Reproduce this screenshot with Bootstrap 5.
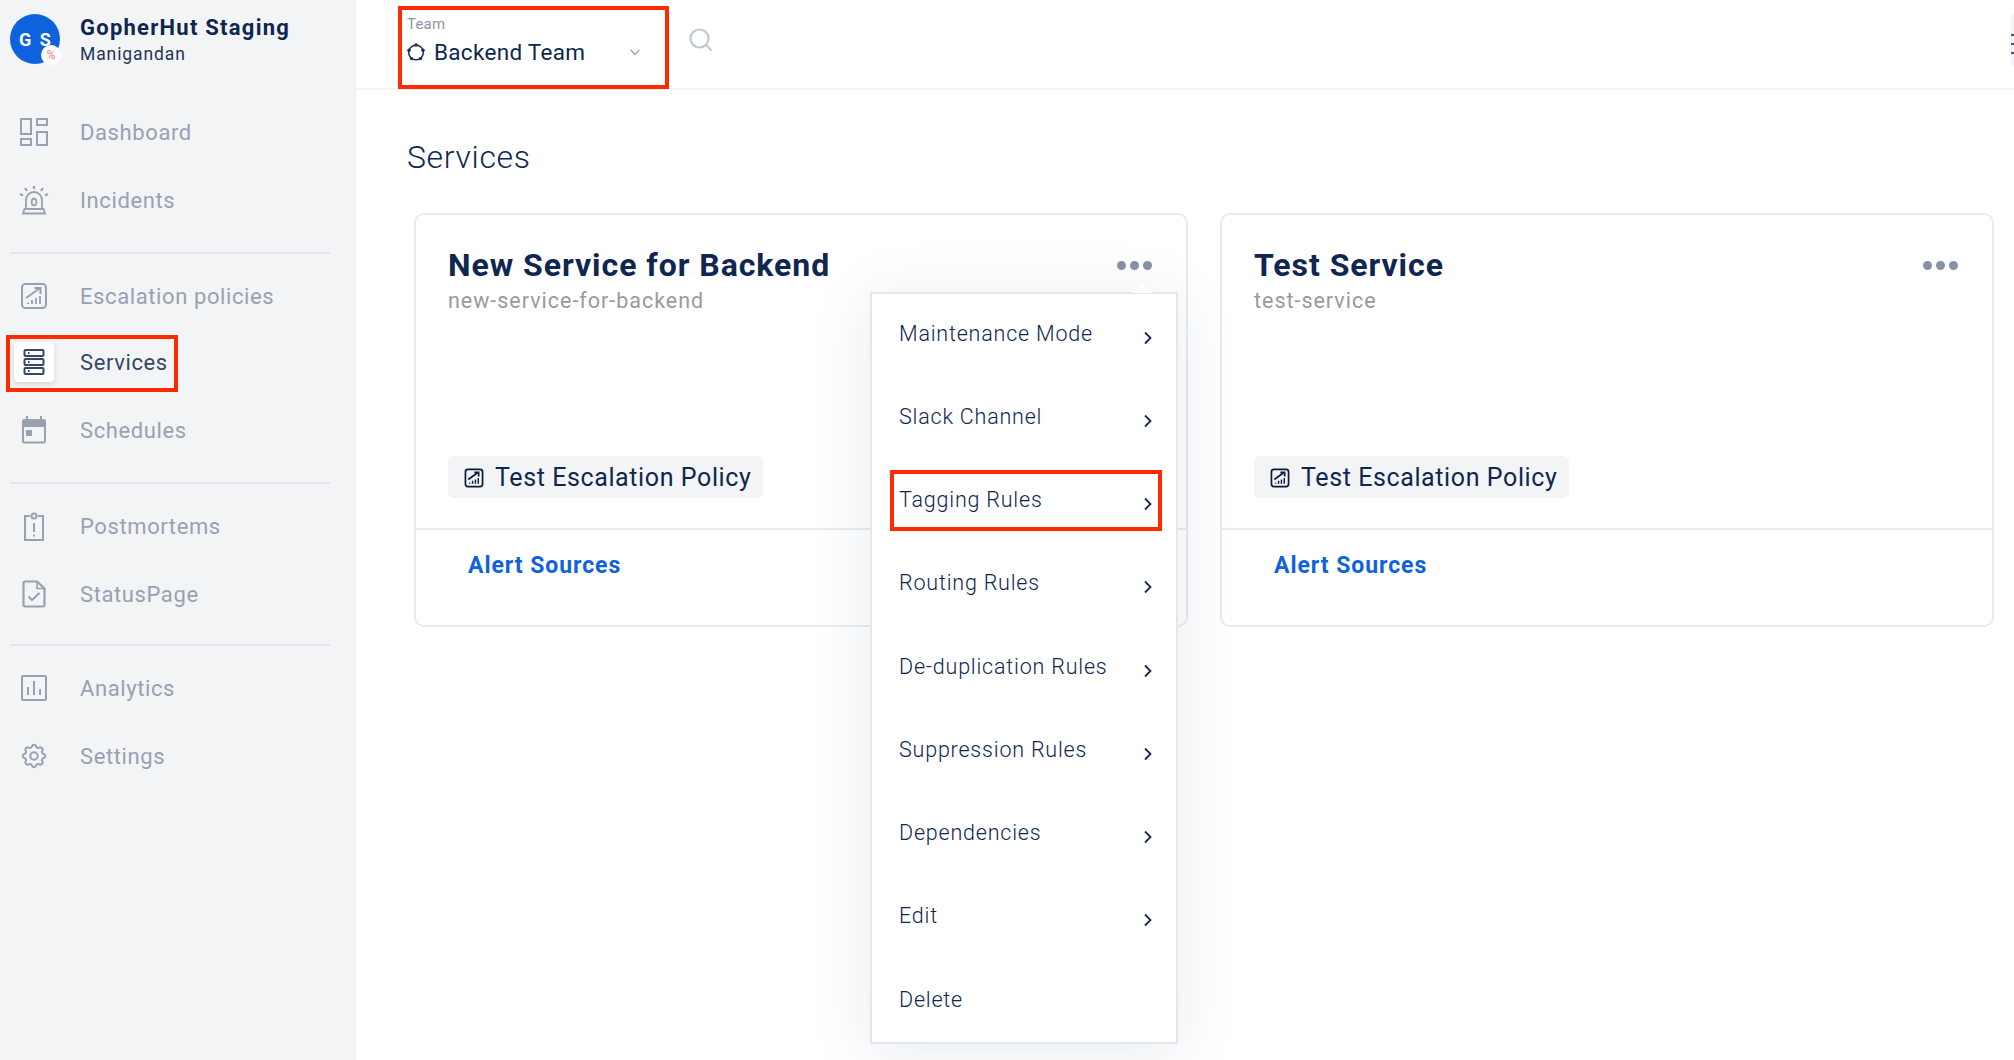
<!doctype html>
<html lang="en">
<head>
<meta charset="utf-8">
<title>Services</title>
<link rel="stylesheet" href="https://cdn.jsdelivr.net/npm/bootstrap@5.3.0/dist/css/bootstrap.min.css">
<style>
html,body{height:100%;overflow:hidden}
body{font-family:Roboto,"Liberation Sans",sans-serif;color:#0f2650;background:#fff}
.app-shell{position:relative;width:2014px;height:1060px;overflow:hidden}
.rail{width:356px;flex:none;background:#f3f4f6;box-shadow:inset -2px 0 2px -1px #eceef1;height:100%}
.rail-head{height:98px;padding:14px 0 0 10px;gap:20px}
.ava{position:relative;width:50px;height:50px;padding-left:2px;border-radius:50%;background:#0f62de;color:#fff;font-weight:700;font-size:18px;letter-spacing:2px;flex:none}
.ava-tag{position:absolute;right:-1px;bottom:-1px;width:20px;height:20px;border-radius:50%;background:#fff;color:#f18a8a;font-size:12px;font-weight:500;letter-spacing:0}
.org{font-size:22px;font-weight:700;line-height:28px;letter-spacing:1.25px;color:#0f2650}
.who{font-size:17.5px;line-height:25px;letter-spacing:.9px;color:#1f3357}
.nav-row{height:68px;padding-left:14px;gap:26px;color:#98a1b1;font-size:22px;letter-spacing:.6px;text-decoration:none}
.nav-row:hover{color:#98a1b1}
.nav-row.is-on{color:#354766;margin-top:-2px}
.tile{width:40px;height:40px;flex:none;border-radius:4px}
.is-on .tile{background:#fff;box-shadow:0 2px 5px rgba(40,50,70,.16)}
.rule{height:2px;width:320px;margin-left:10px;background:#e3e5e9}
.rule-a{margin-top:18px;margin-bottom:8px}
.rule-b{margin-top:16px;margin-bottom:8px}
.topbar{height:90px;border-bottom:2px solid #f3f4f6;padding-left:51px}
.team-pick{width:240px;padding-top:14px}
.team-cap{font-size:15px;line-height:20px;color:#8d96a8;letter-spacing:.2px}
.team-val{font-size:22.5px;line-height:30px;margin-top:3px;letter-spacing:.3px;gap:9px;color:#0f2650}
.team-caret{margin-left:auto;margin-right:7px}
.find{margin:28px 0 0 42px}
.more-edge{width:3px;height:52px;margin-top:14px;background:#f3f4f6;overflow:hidden}
.page-body{padding:0 20px 0 51px}
.page-title{font-size:32px;font-weight:300;line-height:40px;margin:47px 0 36px;color:#0f2650;letter-spacing:.65px}
.svc-row{--bs-gutter-x:32px;margin-left:-9px}
.svc-card{height:414px;border:2px solid #e7ebf3;border-radius:10px;background:#fff}
.svc-top{padding:32px 32px 30px 32px;height:315px;border-bottom:2px solid #e7ebf3}
.svc-name{font-size:32px;font-weight:700;line-height:36px;color:#0f2650;letter-spacing:.95px;margin:0}
.svc-slug{font-size:21.5px;line-height:26px;margin-top:5px;color:#9a9a9a;letter-spacing:.98px}
.dots{gap:4px;margin:0 2px 0 0}
.dots i{display:block;width:9px;height:9px;border-radius:50%;background:#8791a6}
.policy{height:42px;padding:2px 12px 0 16px;gap:11px;background:#f3f4f6;border-radius:6px;font-size:25px;letter-spacing:.6px;color:#0f2650}
.svc-foot{padding:0 0 0 52px;height:95px;font-size:23px;font-weight:700;letter-spacing:.95px}
.svc-foot a{color:#0f62de;text-decoration:none;display:block;margin-top:21px;line-height:30px}
.pop{position:absolute;left:454px;top:77px;width:308px;height:752px;background:#fff;border:2px solid #e2e6ef;box-shadow:0 8px 60px rgba(30,50,90,.1);z-index:5}
.pop::before{content:"";position:absolute;left:260px;top:-11px;border:10px solid transparent;border-top:0;border-bottom-color:#fff}
.pop-row{height:83.25px;padding:0 24px 4px 27px;font-size:21.5px;font-weight:300;color:#0f2650;letter-spacing:.8px}
.pop-row svg{margin-top:8px}
.note{position:absolute;border:4px solid #ff2a00;z-index:10;pointer-events:none}
.note-team{left:398px;top:6px;width:271px;height:83px}
.note-svc{left:6px;top:335px;width:172px;height:57px}
.note-tag{left:890px;top:470px;width:272px;height:61px}
</style>
</head>
<body>
<div class="app-shell d-flex">
  <aside class="rail">
    <div class="rail-head d-flex">
      <div class="ava d-flex align-items-center justify-content-center">G S
        <span class="ava-tag d-flex align-items-center justify-content-center">%</span>
      </div>
      <div>
        <div class="org">GopherHut Staging</div>
        <div class="who">Manigandan</div>
      </div>
    </div>

    <a class="nav-row d-flex align-items-center" href="#">
      <span class="tile d-flex align-items-center justify-content-center">
        <svg width="30" height="30" viewBox="0 0 30 30" fill="none" stroke="currentColor" stroke-width="2"><rect x="2" y="2" width="10" height="15"/><rect x="18" y="2" width="10" height="6"/><rect x="2" y="22" width="10" height="6"/><rect x="18" y="15" width="10" height="13"/></svg>
      </span>Dashboard</a>
    <a class="nav-row d-flex align-items-center" href="#">
      <span class="tile d-flex align-items-center justify-content-center">
        <svg width="30" height="30" viewBox="0 0 30 30" fill="none" stroke="currentColor" stroke-width="1.8"><path d="M7 24V15a8 8 0 0 1 16 0v9"/><path d="M4 28.500l1.500-4.500h19l1.500 4.500z"/><ellipse cx="15" cy="17" rx="2.400" ry="3.400"/><path d="M15 1v3M6 3l2 3M24 3l-2 3M1 9l3 1.500M29 9l-3 1.500" stroke-width="2.200"/></svg>
      </span>Incidents</a>
    <div class="rule rule-a"></div>
    <a class="nav-row d-flex align-items-center" href="#">
      <span class="tile d-flex align-items-center justify-content-center">
        <svg width="28" height="28" viewBox="0 0 28 28" fill="none" stroke="currentColor" stroke-width="2"><rect x="2" y="2" width="24" height="24" rx="3.500"/><path d="M6 16L20 6M14.500 6H20.500V12"/><path d="M8 22v-1.500M12 22v-4M16 22v-6M20 22v-8" stroke-width="1.800"/></svg>
      </span>Escalation policies</a>
    <a class="nav-row is-on d-flex align-items-center" href="#">
      <span class="tile d-flex align-items-center justify-content-center">
        <svg width="22" height="28" viewBox="0 0 22 28" fill="none" stroke="currentColor" stroke-width="2"><rect x="1.500" y="2" width="19" height="6" rx="1"/><rect x="1.500" y="11" width="19" height="6" rx="1"/><rect x="1.500" y="20" width="19" height="6" rx="1"/><path d="M5 5h1.500M5 14h1.500M5 23h1.500"/></svg>
      </span>Services</a>
    <a class="nav-row d-flex align-items-center" href="#">
      <span class="tile d-flex align-items-center justify-content-center">
        <svg width="26" height="30" viewBox="0 0 26 30" fill="currentColor"><path d="M5 1h2v4H5zM19 1h2v4h-2z"/><path d="M3.500 4h19A2.500 2.500 0 0 1 25 6.500V26a2.500 2.500 0 0 1-2.500 2.500h-19A2.500 2.500 0 0 1 1 26V6.500A2.500 2.500 0 0 1 3.500 4zM3 12v14c0 .3.200.5.500.5h19c.3 0 .5-.2.500-.5V12z" fill-rule="evenodd"/><rect x="5" y="15" width="6" height="6"/></svg>
      </span>Schedules</a>
    <div class="rule rule-a"></div>
    <a class="nav-row d-flex align-items-center" href="#">
      <span class="tile d-flex align-items-center justify-content-center">
        <svg width="22" height="30" viewBox="0 0 22 30" fill="none" stroke="currentColor" stroke-width="2"><path d="M7 5H2v24h18V5h-5"/><circle cx="11" cy="5" r="3.500" fill="currentColor" stroke="none"/><circle cx="11" cy="5" r="1.500" fill="#f3f4f6" stroke="none"/><path d="M11 12v9M11 23.500v2"/></svg>
      </span>Postmortems</a>
    <a class="nav-row d-flex align-items-center" href="#">
      <span class="tile d-flex align-items-center justify-content-center">
        <svg width="24" height="28" viewBox="0 0 24 28" fill="none" stroke="currentColor" stroke-width="2.200"><path d="M3 1.500h12l7.500 7V25a1.500 1.500 0 0 1-1.500 1.500H3A1.500 1.500 0 0 1 1.500 25V3A1.500 1.500 0 0 1 3 1.500z"/><path d="M15 1.500v7h7.500" stroke-width="1.600"/><path d="M6.500 16.500l3.500 3.500 7.500-7" stroke-width="2"/></svg>
      </span>StatusPage</a>
    <div class="rule rule-b"></div>
    <a class="nav-row d-flex align-items-center" href="#">
      <span class="tile d-flex align-items-center justify-content-center">
        <svg width="26" height="26" viewBox="0 0 26 26" fill="none" stroke="currentColor" stroke-width="2"><rect x="1" y="1" width="24" height="24" rx="1"/><path d="M7 20v-8M13 20V6M19 20v-6"/></svg>
      </span>Analytics</a>
    <a class="nav-row d-flex align-items-center" href="#">
      <span class="tile d-flex align-items-center justify-content-center">
        <svg width="30" height="30" viewBox="0 0 24 24" fill="none" stroke="currentColor" stroke-width="1.600"><path d="M10.325 4.317c.426-1.756 2.924-1.756 3.350 0a1.724 1.724 0 002.573 1.066c1.543-.94 3.310.826 2.370 2.370a1.724 1.724 0 001.065 2.572c1.756.426 1.756 2.924 0 3.350a1.724 1.724 0 00-1.066 2.573c.94 1.543-.826 3.310-2.370 2.370a1.724 1.724 0 00-2.572 1.065c-.426 1.756-2.924 1.756-3.350 0a1.724 1.724 0 00-2.573-1.066c-1.543.94-3.310-.826-2.370-2.370a1.724 1.724 0 00-1.065-2.572c-1.756-.426-1.756-2.924 0-3.350a1.724 1.724 0 001.066-2.573c-.94-1.543.826-3.310 2.370-2.370.996.608 2.296.07 2.572-1.065z"/><circle cx="12" cy="12" r="3"/></svg>
      </span>Settings</a>
  </aside>

  <main class="flex-grow-1">
    <header class="topbar d-flex">
      <div class="team-pick">
        <div class="team-cap">Team</div>
        <div class="team-val d-flex align-items-center">
          <svg width="18" height="18" viewBox="0 0 18 18" fill="none" stroke="#1a2e55" stroke-width="1.500"><circle cx="9" cy="9.500" r="7.300"/><g fill="#1a2e55" stroke="none"><circle cx="9" cy="2" r="1.700"/><circle cx="16" cy="7.300" r="1.700"/><circle cx="13.400" cy="15.600" r="1.700"/><circle cx="4.600" cy="15.600" r="1.700"/><circle cx="2" cy="7.300" r="1.700"/></g></svg>
          <span>Backend Team</span>
          <svg class="team-caret" width="10" height="7" viewBox="0 0 10 7" fill="none" stroke="#9aa3b3" stroke-width="1.300"><path d="M.7.8L5 5.500 9.300.8"/></svg>
        </div>
      </div>
      <svg class="find" width="24" height="24" viewBox="0 0 24 24" fill="none" stroke="#c2c9d4" stroke-width="2.200"><circle cx="10.500" cy="10.500" r="9"/><path d="M17 17l5.500 5.500"/></svg>
      <div class="more-edge ms-auto">
        <svg width="3" height="52" viewBox="0 0 3 52" stroke="#0f2650" stroke-width="1.500"><path d="M0 21h3M0 30h3M0 39h3"/></svg>
      </div>
    </header>

    <div class="page-body">
      <h1 class="page-title">Services</h1>
      <div class="row svc-row">
        <div class="col-6">
          <div class="card svc-card">
            <div class="svc-top d-flex flex-column">
              <div class="d-flex justify-content-between align-items-center">
                <h2 class="svc-name">New Service for Backend</h2>
                <div class="dots d-flex"><i></i><i></i><i></i></div>
              </div>
              <div class="svc-slug">new-service-for-backend</div>
              <div class="mt-auto"><span class="policy d-inline-flex align-items-center">
                <svg width="20" height="20" viewBox="0 0 28 28" fill="none" stroke="#0b1c3a" stroke-width="2.400"><rect x="2" y="2" width="24" height="24" rx="3.500"/><path d="M6 16L20 6M14.500 6H20.500V12"/><path d="M8 22v-1.500M12 22v-4M16 22v-6M20 22v-8" stroke-width="2"/></svg>
                Test Escalation Policy</span></div>
            </div>
            <div class="svc-foot"><a href="#">Alert Sources</a></div>

            <div class="pop">
              <div class="pop-row d-flex align-items-center justify-content-between">Maintenance Mode<svg width="8" height="14" viewBox="0 0 8 14" fill="none" stroke="#14294f" stroke-width="1.800"><path d="M1 1.500L6.500 7 1 12.500"/></svg></div>
              <div class="pop-row d-flex align-items-center justify-content-between">Slack Channel<svg width="8" height="14" viewBox="0 0 8 14" fill="none" stroke="#14294f" stroke-width="1.800"><path d="M1 1.500L6.500 7 1 12.500"/></svg></div>
              <div class="pop-row d-flex align-items-center justify-content-between">Tagging Rules<svg width="8" height="14" viewBox="0 0 8 14" fill="none" stroke="#14294f" stroke-width="1.800"><path d="M1 1.500L6.500 7 1 12.500"/></svg></div>
              <div class="pop-row d-flex align-items-center justify-content-between">Routing Rules<svg width="8" height="14" viewBox="0 0 8 14" fill="none" stroke="#14294f" stroke-width="1.800"><path d="M1 1.500L6.500 7 1 12.500"/></svg></div>
              <div class="pop-row d-flex align-items-center justify-content-between">De-duplication Rules<svg width="8" height="14" viewBox="0 0 8 14" fill="none" stroke="#14294f" stroke-width="1.800"><path d="M1 1.500L6.500 7 1 12.500"/></svg></div>
              <div class="pop-row d-flex align-items-center justify-content-between">Suppression Rules<svg width="8" height="14" viewBox="0 0 8 14" fill="none" stroke="#14294f" stroke-width="1.800"><path d="M1 1.500L6.500 7 1 12.500"/></svg></div>
              <div class="pop-row d-flex align-items-center justify-content-between">Dependencies<svg width="8" height="14" viewBox="0 0 8 14" fill="none" stroke="#14294f" stroke-width="1.800"><path d="M1 1.500L6.500 7 1 12.500"/></svg></div>
              <div class="pop-row d-flex align-items-center justify-content-between">Edit<svg width="8" height="14" viewBox="0 0 8 14" fill="none" stroke="#14294f" stroke-width="1.800"><path d="M1 1.500L6.500 7 1 12.500"/></svg></div>
              <div class="pop-row d-flex align-items-center justify-content-between">Delete</div>
            </div>
          </div>
        </div>
        <div class="col-6">
          <div class="card svc-card">
            <div class="svc-top d-flex flex-column">
              <div class="d-flex justify-content-between align-items-center">
                <h2 class="svc-name">Test Service</h2>
                <div class="dots d-flex"><i></i><i></i><i></i></div>
              </div>
              <div class="svc-slug">test-service</div>
              <div class="mt-auto"><span class="policy d-inline-flex align-items-center">
                <svg width="20" height="20" viewBox="0 0 28 28" fill="none" stroke="#0b1c3a" stroke-width="2.400"><rect x="2" y="2" width="24" height="24" rx="3.500"/><path d="M6 16L20 6M14.500 6H20.500V12"/><path d="M8 22v-1.500M12 22v-4M16 22v-6M20 22v-8" stroke-width="2"/></svg>
                Test Escalation Policy</span></div>
            </div>
            <div class="svc-foot"><a href="#">Alert Sources</a></div>
          </div>
        </div>
      </div>
    </div>
  </main>

  <div class="note note-team"></div>
  <div class="note note-svc"></div>
  <div class="note note-tag"></div>
</div>
<script src="https://cdn.jsdelivr.net/npm/bootstrap@5.3.0/dist/js/bootstrap.bundle.min.js"></script>
</body>
</html>
